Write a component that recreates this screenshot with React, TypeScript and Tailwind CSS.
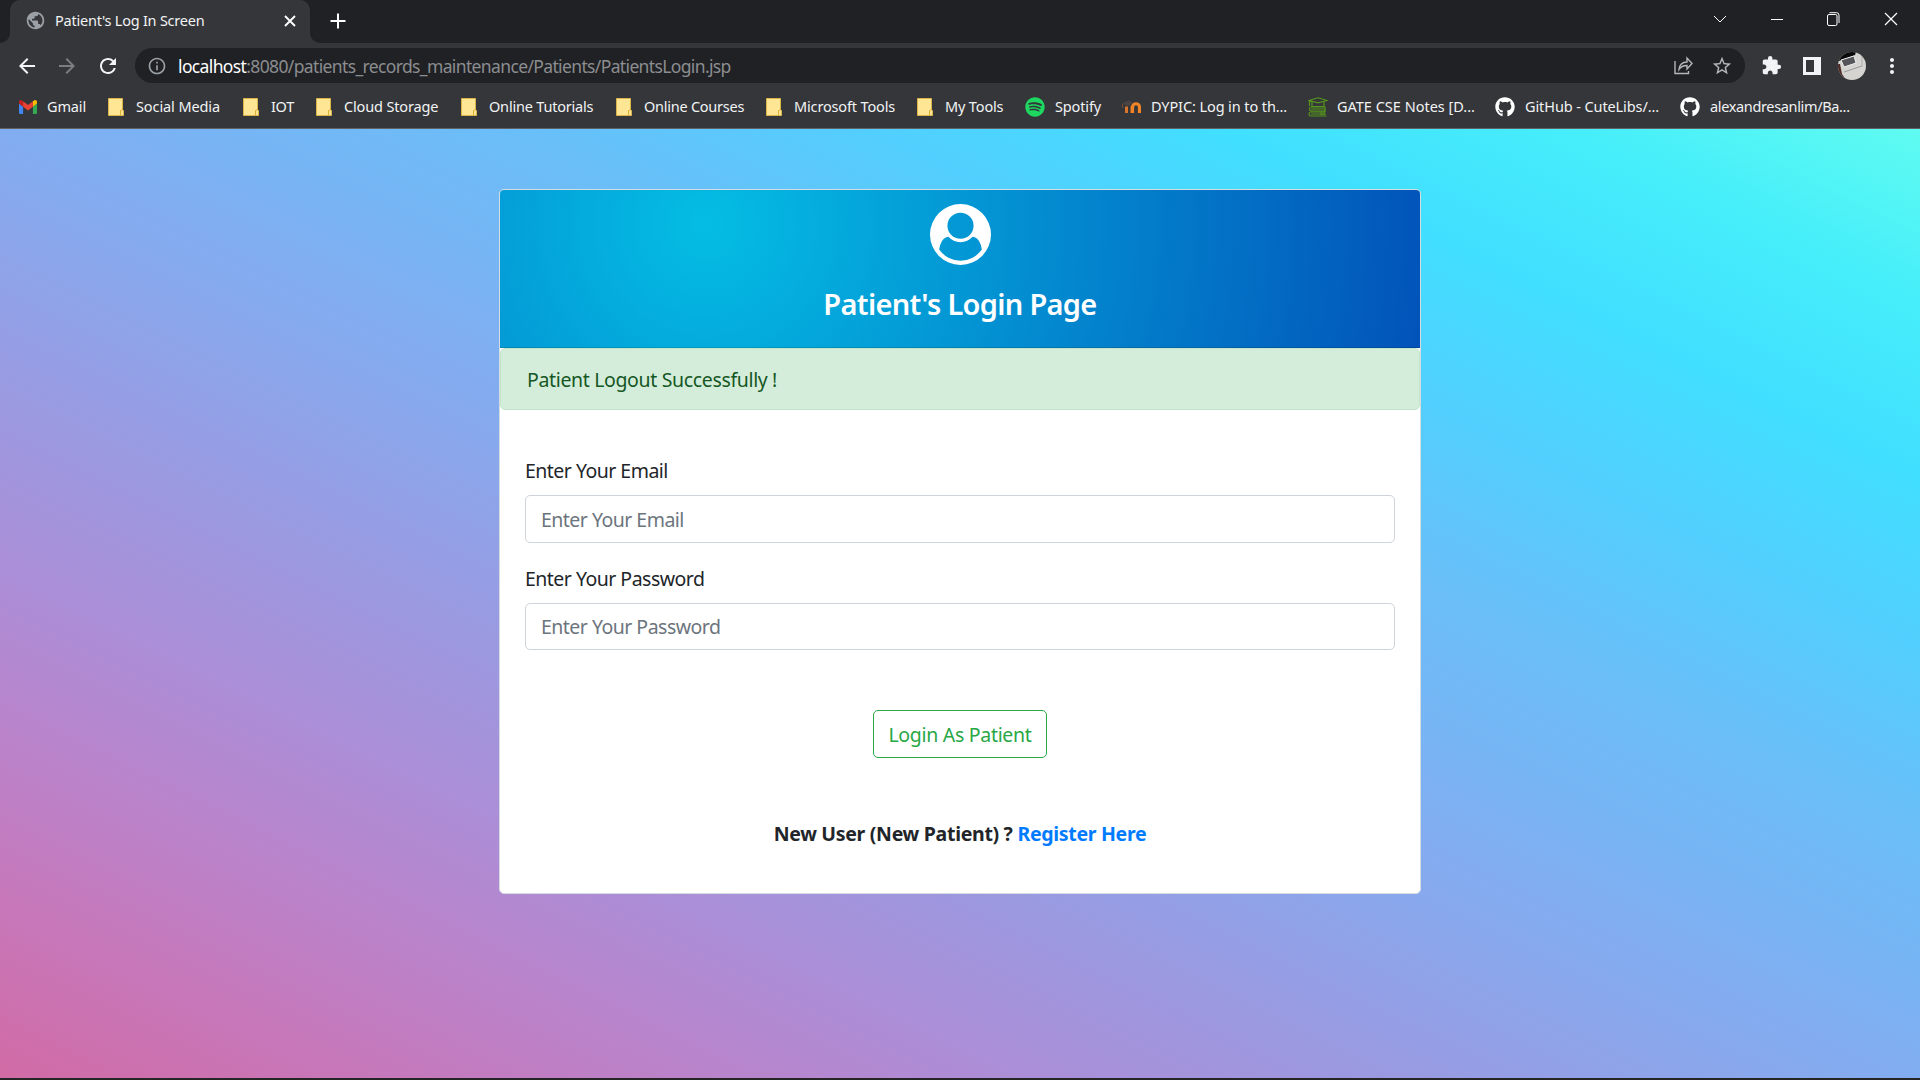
import React from "react";
import { FaGithub, FaSpotify } from "react-icons/fa";
import { MdExtension, MdStarBorder, MdMoreVert, MdPublic, MdArrowBack, MdArrowForward, MdRefresh, MdInfoOutline } from "react-icons/md";

function FolderIcon() {
  return (
    <svg width="16" height="18" viewBox="0 0 16 18" className="shrink-0">
      <path d="M.5.5h14v11.5l1 .5v5H.5z" fill="#ffe694" stroke="#dcb54a" />
      <path d="M12.5 17v-4.5l2-1" fill="none" stroke="#dcae35" />
    </svg>
  );
}

function GmailIcon() {
  return (
    <svg width="18" height="14" viewBox="52 42 88 66" preserveAspectRatio="none" className="shrink-0">
      <path fill="#4285f4" d="M58 108h14V74L52 59v43c0 3.32 2.69 6 6 6" />
      <path fill="#34a853" d="M120 108h14c3.32 0 6-2.69 6-6V59l-20 15" />
      <path fill="#fbbc04" d="M120 48v26l20-15v-8c0-7.42-8.47-11.65-14.4-7.2" />
      <path fill="#ea4335" d="M72 74V48l24 18 24-18v26L96 92" />
      <path fill="#c5221f" d="M52 51v8l20 15V48l-5.6-4.2c-5.94-4.45-14.4-.22-14.4 7.2" />
    </svg>
  );
}

function SpotifyIcon() {
  return <FaSpotify className="size-5 shrink-0 text-[#1ed760]" />;
}

function MoodleIcon() {
  return (
    <svg width="20" height="14" viewBox="0 0 20 14" className="shrink-0" fill="none">
      <path d="M1.5 4v4" stroke="#7a4a35" strokeWidth="1" />
      <path d="M5.5 13V6.500M11 13V6" stroke="#d9752b" strokeWidth="3" />
      <path d="M11.500 13V7.500c0-5 7-5 7 0V13" stroke="#ee8427" strokeWidth="3.200" />
      <path d="M1 3.500 8 .5l4 2.500-5 3z" fill="#4a4544" />
    </svg>
  );
}

function BooksIcon() {
  return (
    <svg width="20" height="20" viewBox="0 0 20 20" className="shrink-0" fill="none" stroke="#56951c" strokeWidth="1.2">
      <path d="M1 3.5 10 .8l9 2.700-9 2.300zM4 5v4.500h12V5M1.500 3.500V9" />
      <path d="M17.500 10H3c-2 0-2 4 0 4h15M3 12h14M17 10v4" />
      <path d="M2 15h15.500M18.500 19H2.500c-2 0-2-4 0-4M3 17h15" />
      <path d="M13 14v4l1.500-1 1.500 1v-4" strokeWidth="1" />
    </svg>
  );
}

function GithubIcon() {
  return <FaGithub className="size-5 shrink-0 text-white" />;
}

const bookmarks = [
  { label: "Gmail", icon: GmailIcon, width: "w-[89px]", gap: "gap-[10px]", track: "tracking-[-0.15px]" },
  { label: "Social Media", icon: FolderIcon, width: "w-[135px]", gap: "gap-[12px]", track: "tracking-[-0.1px]" },
  { label: "IOT", icon: FolderIcon, width: "w-[73px]", gap: "gap-[12px]", track: "tracking-[-0.3px]" },
  { label: "Cloud Storage", icon: FolderIcon, width: "w-[145px]", gap: "gap-[12px]", track: "tracking-[-0.15px]" },
  { label: "Online Tutorials", icon: FolderIcon, width: "w-[155px]", gap: "gap-[12px]", track: "tracking-[-0.2px]" },
  { label: "Online Courses", icon: FolderIcon, width: "w-[150px]", gap: "gap-[12px]", track: "tracking-[-0.25px]" },
  { label: "Microsoft Tools", icon: FolderIcon, width: "w-[151px]", gap: "gap-[12px]", track: "tracking-[-0.15px]" },
  { label: "My Tools", icon: FolderIcon, width: "w-[108px]", gap: "gap-[12px]", track: "tracking-[-0.15px]" },
  { label: "Spotify", icon: SpotifyIcon, width: "w-[96px]", gap: "gap-[10px]", track: "tracking-[-0.15px]" },
  { label: "DYPIC: Log in to th...", icon: MoodleIcon, width: "w-[187px]", gap: "gap-[10px]", track: "tracking-[-0.1px]" },
  { label: "GATE CSE Notes [D...", icon: BooksIcon, width: "w-[187px]", gap: "gap-[9px]", track: "tracking-[0px]" },
  { label: "GitHub - CuteLibs/...", icon: GithubIcon, width: "w-[185px]", gap: "gap-[10px]", track: "tracking-[-0.1px]" },
  { label: "alexandresanlim/Ba...", icon: GithubIcon, width: "w-[190px]", gap: "gap-[10px]", track: "tracking-[-0.35px]" },
];

function TabStrip() {
  return (
    <div className="flex h-[43px] items-end bg-[#202124]">
      <svg width="10" height="10" viewBox="0 0 10 10" className="shrink-0"><path d="M10 0v10H0A10 10 0 0 0 10 0" fill="#35363a" /></svg>
      <div className="flex h-full w-[300px] shrink-0 items-center rounded-t-[10px] bg-[#35363a] pr-[14px] pb-[2px] pl-[15px]">
        <MdPublic className="size-[21px] text-[#9aa0a6]" />
        <span className="ml-[9px] pb-px text-[14.5px] leading-5 tracking-[-0.23px] whitespace-nowrap text-[#f1f3f4]">Patient's Log In Screen</span>
        <svg width="12" height="12" viewBox="0 0 12 12" className="ml-auto" stroke="#fff" strokeWidth="1.9"><path d="m1 1 10 10M11 1 1 11" /></svg>
      </div>
      <svg width="10" height="10" viewBox="0 0 10 10" className="shrink-0"><path d="M0 0v10h10A10 10 0 0 1 0 0" fill="#35363a" /></svg>
      <svg width="16" height="16" viewBox="0 0 16 16" className="mb-[14px] ml-[10px]" stroke="#fff" strokeWidth="2"><path d="M8 .5v15M.5 8h15" /></svg>
      <div className="mr-[22px] mb-[17px] ml-auto flex h-[14px] items-center text-white">
        <svg width="14" height="9" viewBox="0 0 14 9" fill="none" stroke="currentColor" strokeWidth="1"><path d="m1 1 6 6 6-6" /></svg>
        <svg width="12" height="1" viewBox="0 0 12 1" className="ml-[44px]" fill="currentColor"><path d="M0 0h12v1H0z" /></svg>
        <svg width="13" height="14" viewBox="0 0 13 14" className="ml-[44px]" fill="none" stroke="currentColor" strokeWidth="1"><rect x=".5" y="2.500" width="9.500" height="11" rx="1.500" /><path d="M2.500.700h7a2.500 2.500 0 0 1 2.500 2.500V11" /></svg>
        <svg width="14" height="14" viewBox="0 0 14 14" className="ml-[44px]" stroke="currentColor" strokeWidth="1.200"><path d="m1 1 12 12M13 1 1 13" /></svg>
      </div>
    </div>
  );
}

function Avatar() {
  return (
    <svg width="28" height="28" viewBox="0 0 28 28" className="ml-[17px]">
      <clipPath id="avatar"><circle cx="14" cy="14" r="14" /></clipPath>
      <g clipPath="url(#avatar)">
        <path d="M0 0h28v28H0z" fill="#d6d4d0" />
        <path d="M0 0h18l-1 3-16 6z" fill="#090909" />
        <path d="m3 8 13-4 2 7-12 4z" fill="#55565a" stroke="#eee" />
        <path d="m6 20 18-6" stroke="#999" />
        <path d="M0 12h2l2 10 4 6H0z" fill="#4c2b25" />
        <path d="M24 2v13" stroke="#aaa" />
      </g>
    </svg>
  );
}

function Toolbar() {
  return (
    <div className="flex h-[45px] items-center bg-[#35363a] pl-[15px]">
      <MdArrowBack className="size-6 text-[#f1f3f4]" />
      <MdArrowForward className="ml-4 size-6 text-[#7c7d80]" />
      <MdRefresh className="ml-[17px] size-6 text-[#f1f3f4]" />
      <div className="ml-[15px] flex h-[35px] w-[1610px] items-center rounded-full bg-[#202124] pr-[12px] pl-[12px]">
        <MdInfoOutline className="size-5 text-[#9aa0a6]" />
        <div className="ml-[11px] text-[17.5px] leading-6 tracking-[-0.635px] whitespace-nowrap text-[#8b8d90]">
          <span className="text-white">localhost</span>:8080/patients_records_maintenance/Patients/PatientsLogin.jsp
        </div>
        <svg width="19" height="19" viewBox="0 0 19 19" className="ml-auto" fill="none" stroke="#b4b6b8" strokeWidth="1.400">
          <path d="M1 5v12.500h13.500V15" />
          <path d="M5 13.500c0-4 3-7.500 8-7.500V2l5 5.500-5 5.500V9.500c-4 0-6.500 1.500-8 4z" />
        </svg>
        <MdStarBorder className="ml-[18px] size-[22px] text-[#b4b6b8]" />
      </div>
      <MdExtension className="ml-[16px] size-[21px] text-[#f1f3f4]" />
      <svg width="18" height="18" viewBox="0 0 18 18" className="ml-[21px]"><path d="M0 0h18v18H0zM3 3v12h8V3z" fill="#f1f3f4" fillRule="evenodd" /></svg>
      <Avatar />
      <MdMoreVert className="ml-[14px] size-6 text-[#f1f3f4]" />
    </div>
  );
}

function BookmarksBar() {
  return (
    <div className="flex h-[41px] items-center border-b border-[#606165] bg-[#35363a] pb-[3px] pl-[19px]">
      {bookmarks.map(({ label, icon: Icon, width, gap, track }) => (
        <div key={label} className={`flex shrink-0 items-center ${width} ${gap}`}>
          <Icon />
          <span className={`pb-[2px] text-[14.500px] leading-5 whitespace-nowrap text-[#f1f3f4] ${track}`}>{label}</span>
        </div>
      ))}
    </div>
  );
}

function UserCircle() {
  return (
    <svg width="61" height="61" viewBox="0 0 1792 1792" fill="#fff">
      <path d="M1523 1339q-22-155-87.5-257.5t-184.5-118.5q-67 74-159.5 115.5t-195.5 41.5-195.5-41.5-159.5-115.5q-119 16-184.5 118.5t-87.5 257.5q106 150 271 237.5t356 87.5 356-87.5 271-237.5zm-243-699q0-159-112.5-271.5t-271.5-112.5-271.5 112.5-112.5 271.5 112.5 271.5 271.5 112.5 271.5-112.5 112.5-271.5zm512 256q0 182-71 347.5t-190.5 286-285.5 191.5-349 71q-182 0-348-71t-286-191-191-286-71-348 71-348 191-286 286-191 348-71 348 71 286 191 191 286 71 348z" />
    </svg>
  );
}

function LoginCard() {
  return (
    <div className="h-[705px] w-[922px] overflow-hidden rounded-[5px] border border-[#d5dce2] bg-white">
      <div className="flex h-[158px] flex-col items-center border-b border-black/15 bg-[radial-gradient(circle_at_22.4%_21.7%,rgb(4,189,228)_0%,rgb(2,83,185)_100.2%)] pt-[14px]">
        <UserCircle />
        <h1 className="mt-[21px] text-[29px] leading-9 font-semibold tracking-[-0.68px] whitespace-nowrap text-white">Patient's Login Page</h1>
      </div>
      <div className="flex h-[62px] items-center rounded-[5px] border border-[#c3e6cb] bg-[#d4edda] px-[26px] pt-px text-[19.500px] tracking-[-0.35px] text-[#155724]">Patient Logout Successfully !</div>
      <form className="flex flex-col px-[25px] pt-[46px] text-[19.500px] tracking-[-0.52px] text-[#212529]" onSubmit={(e) => e.preventDefault()}>
        <label htmlFor="email" className="leading-[30px]">Enter Your Email</label>
        <input id="email" type="email" placeholder="Enter Your Email" className="mt-[9px] h-[48px] rounded-[5px] border border-[#ced4da] px-[15px] placeholder:text-[#6c757d]" />
        <label htmlFor="password" className="mt-[21px] leading-[30px]">Enter Your Password</label>
        <input id="password" type="password" placeholder="Enter Your Password" className="mt-[9px] h-[47px] rounded-[5px] border border-[#ced4da] px-[15px] placeholder:text-[#6c757d]" />
        <button className="mt-[60px] h-[48px] w-[174px] self-center rounded-[5px] border border-[#28a745] pt-px tracking-[-0.3px] whitespace-nowrap text-[#28a745]">Login As Patient</button>
        <p className="mt-[61px] text-center leading-[30px] font-bold tracking-[-0.3px] whitespace-nowrap">
          New User (New Patient) ? <a href="#register" className="text-[#007bff]">Register Here</a>
        </p>
      </form>
    </div>
  );
}

export default function App() {
  return (
    <div className="flex h-[1080px] w-[1920px] flex-col overflow-hidden font-['Noto_Sans','Open_Sans',sans-serif]">
      <TabStrip />
      <Toolbar />
      <BookmarksBar />
      <main className="flex grow items-start justify-center bg-[linear-gradient(to_right_top,#d16ba5,#c777b9,#ba83ca,#aa8fd8,#9a9ae1,#8aa7ec,#79b3f4,#69bff8,#52cffe,#41dfff,#46eefa,#5ffbf1)] pt-[60px]">
        <LoginCard />
      </main>
      <div className="h-[2px] shrink-0 bg-[#252525]" />
    </div>
  );
}
